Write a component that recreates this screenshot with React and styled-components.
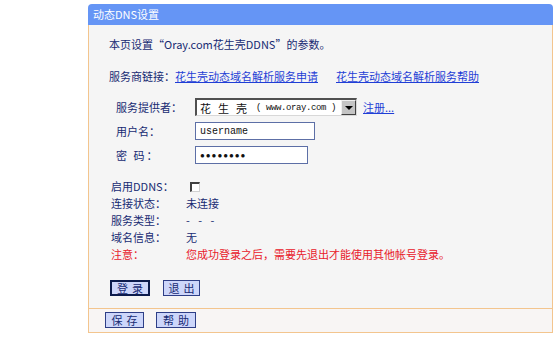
import React from "react";
import styled, { createGlobalStyle } from "styled-components";

const Global = createGlobalStyle`
  html, body { margin: 0; padding: 0; background: #ffffff; }
  body { font-family: "Noto Sans CJK SC", "Noto Sans", sans-serif; font-size: 11px; }
`;

const Page = styled.div`
  width: 554px;
  height: 338px;
  padding-top: 4px;
  padding-left: 88px;
  box-sizing: border-box;
`;

const Card = styled.div`
  width: 465px;
  display: flex;
  flex-direction: column;
`;

const Header = styled.div`
  height: 21px;
  background: #6595f5;
  border-radius: 4px 4px 0 0;
  color: #ffffff;
  font-size: 11px;
  line-height: 21px;
  padding-left: 5px;
`;

const Main = styled.div`
  background: #f5f5f5;
  border-left: 1px solid #f3c58e;
  border-right: 1px solid #f3c58e;
  border-bottom: 1px solid #f3c58e;
  padding: 11px 0 11px 20px;
  height: 284px;
  box-sizing: border-box;
  color: #172a72;
`;

const Line = styled.div`
  height: 16px;
  line-height: 16px;
  margin-bottom: ${(p) => p.$mb || 0}px;
  white-space: nowrap;
`;

const Link = styled.a`
  color: #1f3ed6;
  text-decoration: underline;
  margin-left: ${(p) => p.$ml || 0}px;
  cursor: pointer;
  white-space: nowrap;
`;

const FormGrid = styled.div`
  display: grid;
  grid-template-columns: 79px auto;
  grid-auto-rows: 18px;
  row-gap: 6px;
  padding-left: 7px;
  margin-top: 14px;
  align-items: center;
`;

const Label = styled.div`
  line-height: 18px;
  white-space: nowrap;
  letter-spacing: ${(p) => p.$ls || 0}px;
`;

const FieldRow = styled.div`
  display: flex;
  align-items: center;
  gap: 6px;
`;

const Select = styled.div`
  width: 162px;
  height: 18px;
  box-sizing: border-box;
  background: #ffffff;
  border-top: 2px solid #505050;
  border-left: 2px solid #505050;
  border-bottom: 1px solid #d8d8d8;
  border-right: 1px solid #d8d8d8;
  display: flex;
  align-items: center;
  color: #111111;
`;

const SelectText = styled.span`
  flex: 1;
  padding-left: 3px;
  font-size: 11px;
  white-space: nowrap;
  display: flex;
  align-items: center;
  gap: 7px;
  overflow: hidden;
`;

const Mono = styled.span`
  font-family: "Liberation Mono", monospace;
  font-size: 9px;
  letter-spacing: -0.4px;
  white-space: pre;
  margin-left: 2px;
`;

const Arrow = styled.span`
  width: 15px;
  height: 15px;
  flex: none;
  background: #c4c4c4;
  border-left: 1px solid #f0f0f0;
  border-top: 1px solid #f0f0f0;
  border-right: 1px solid #404040;
  border-bottom: 1px solid #404040;
  box-sizing: border-box;
  display: flex;
  align-items: center;
  justify-content: center;
  &::after {
    content: "";
    border-left: 4px solid transparent;
    border-right: 4px solid transparent;
    border-top: 4px solid #000000;
  }
`;

const Input = styled.div`
  width: ${(p) => p.$w}px;
  height: 18px;
  box-sizing: border-box;
  background: #ffffff;
  border: 1px solid #5d6fa6;
  display: flex;
  align-items: center;
  padding-left: 4px;
  font-family: "Liberation Mono", monospace;
  font-size: 10px;
  color: #111111;
`;

const Dots = styled.span`
  font-size: 8px;
  letter-spacing: 1px;
`;

const StatusGrid = styled.div`
  display: grid;
  grid-template-columns: 75px auto;
  grid-auto-rows: 17px;
  padding-left: 2px;
  margin-top: 14px;
  align-items: center;
`;

const Cell = styled.div`
  line-height: 17px;
  white-space: nowrap;
  letter-spacing: ${(p) => p.$ls || 0}px;
  color: ${(p) => (p.$red ? "#e8202a" : "inherit")};
`;

const Check = styled.span`
  display: inline-block;
  width: 10px;
  height: 10px;
  box-sizing: border-box;
  margin-left: 4px;
  margin-top: 4px;
  background: #ffffff;
  border-top: 2px solid #404040;
  border-left: 2px solid #404040;
  border-right: 1px solid #d0d0d0;
  border-bottom: 1px solid #d0d0d0;
`;

const Buttons = styled.div`
  display: flex;
  gap: ${(p) => p.$gap}px;
  margin-top: ${(p) => p.$mt || 0}px;
  padding-left: ${(p) => p.$pl || 0}px;
`;

const Button = styled.button`
  width: ${(p) => p.$w || 39}px;
  height: 16px;
  padding: 0;
  box-sizing: border-box;
  background: #cdd6fa;
  border: ${(p) => (p.$primary ? "2px solid #0c1b4c" : "1px solid #2e3e86")};
  color: #172a72;
  font-family: "Noto Sans CJK SC", sans-serif;
  font-size: 11px;
  line-height: 12px;
  white-space: nowrap;
  display: flex;
  align-items: center;
  justify-content: center;
  gap: 4px;
`;

const Footer = styled.div`
  background: #f8f5f4;
  border-left: 1px solid #f3c58e;
  border-right: 1px solid #f3c58e;
  border-bottom: 1px solid #f3c58e;
  height: 24px;
  box-sizing: border-box;
  padding-top: 3px;
`;

const Chars = ({ text }) =>
  text.split("").map((c, i) => <span key={i}>{c}</span>);

export default function App() {
  return (
    <>
      <Global />
      <Page>
        <Card>
          <Header>动态DNS设置</Header>
          <Main>
            <Line $mb={16}>本页设置“Oray.com花生壳DDNS”的参数。</Line>
            <Line>
              服务商链接：<Link>花生壳动态域名解析服务申请</Link>
              <Link $ml={18}>花生壳动态域名解析服务帮助</Link>
            </Line>
            <FormGrid>
              <Label>服务提供者：</Label>
              <FieldRow>
                <Select>
                  <SelectText>
                    <Chars text="花生壳" />
                    <Mono>( www.oray.com )</Mono>
                  </SelectText>
                  <Arrow />
                </Select>
                <Link>注册...</Link>
              </FieldRow>
              <Label>用户名：</Label>
              <Input $w={120}>username</Input>
              <Label $ls={2}>密 码：</Label>
              <Input $w={113}>
                <Dots>●●●●●●●●</Dots>
              </Input>
            </FormGrid>
            <StatusGrid>
              <Cell>启用DDNS：</Cell>
              <Cell>
                <Check />
              </Cell>
              <Cell>连接状态：</Cell>
              <Cell>未连接</Cell>
              <Cell>服务类型：</Cell>
              <Cell $ls={3}>- - -</Cell>
              <Cell>域名信息：</Cell>
              <Cell>无</Cell>
              <Cell $red>注意：</Cell>
              <Cell $red>您成功登录之后，需要先退出才能使用其他帐号登录。</Cell>
            </StatusGrid>
            <Buttons $gap={13} $mt={17} $pl={1}>
              <Button $primary $w={40}>
                <Chars text="登录" />
              </Button>
              <Button $w={37}>
                <Chars text="退出" />
              </Button>
            </Buttons>
          </Main>
          <Footer>
            <Buttons $gap={12} $pl={16}>
              <Button $w={39}>
                <Chars text="保存" />
              </Button>
              <Button $w={40}>
                <Chars text="帮助" />
              </Button>
            </Buttons>
          </Footer>
        </Card>
      </Page>
    </>
  );
}
